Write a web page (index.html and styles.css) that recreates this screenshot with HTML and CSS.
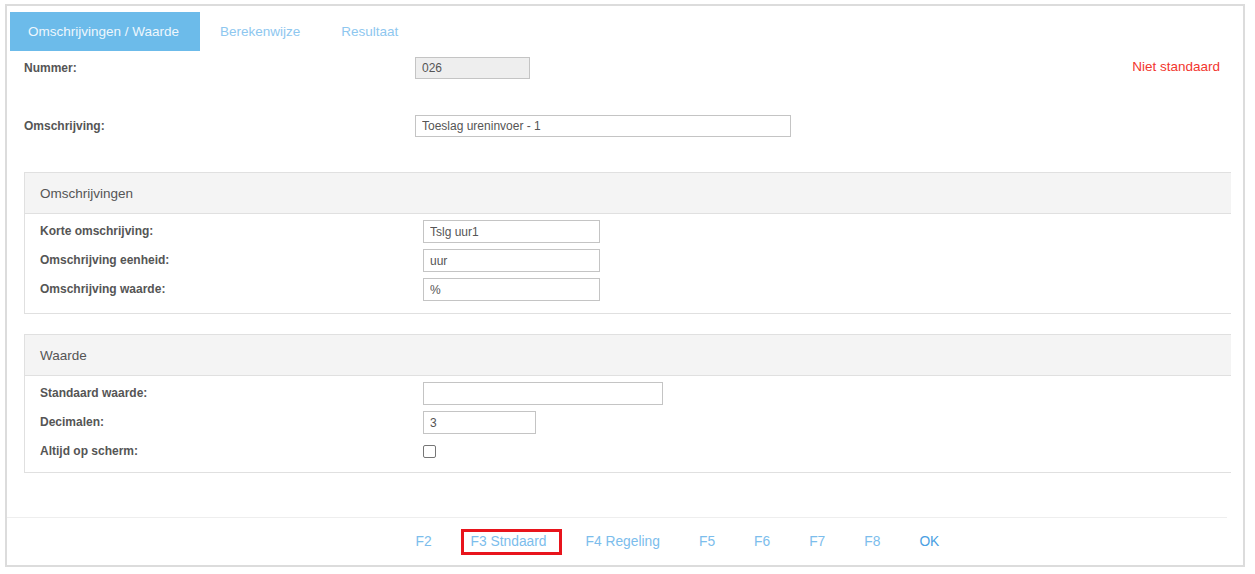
FILE: index.html
```html
<!DOCTYPE html>
<html lang="nl">
<head>
<meta charset="utf-8">
<title>Omschrijvingen / Waarde</title>
<link rel="stylesheet" href="styles.css">
</head>
<body>
<div class="frame">
  <nav class="tabs">
    <a class="tab active">Omschrijvingen / Waarde</a>
    <a class="tab">Berekenwijze</a>
    <a class="tab">Resultaat</a>
  </nav>
  <div class="content">
    <div class="top-row row-nummer">
      <label class="lbl">Nummer:</label>
      <div class="field"><input class="inp inp-num" type="text" value="026" readonly></div>
      <div class="status">Niet standaard</div>
    </div>
    <div class="top-row row-omschr">
      <label class="lbl">Omschrijving:</label>
      <div class="field"><input class="inp inp-omschr" type="text" value="Toeslag ureninvoer - 1"></div>
    </div>

    <section class="panel panel-1">
      <div class="panel-head">Omschrijvingen</div>
      <div class="panel-body">
        <div class="prow"><label class="lbl">Korte omschrijving:</label><input class="inp inp-short" type="text" value="Tslg uur1"></div>
        <div class="prow"><label class="lbl">Omschrijving eenheid:</label><input class="inp inp-short" type="text" value="uur"></div>
        <div class="prow"><label class="lbl">Omschrijving waarde:</label><input class="inp inp-short" type="text" value="%"></div>
      </div>
    </section>

    <section class="panel panel-2">
      <div class="panel-head">Waarde</div>
      <div class="panel-body">
        <div class="prow"><label class="lbl">Standaard waarde:</label><input class="inp inp-std" type="text" value=""></div>
        <div class="prow"><label class="lbl">Decimalen:</label><input class="inp inp-dec" type="text" value="3"></div>
        <div class="prow"><label class="lbl">Altijd op scherm:</label><span class="check"></span></div>
      </div>
    </section>
  </div>
  <footer class="footer">
    <a class="fbtn">F2</a>
    <a class="fbtn selected">F3 Stndaard</a>
    <a class="fbtn">F4 Regeling</a>
    <a class="fbtn">F5</a>
    <a class="fbtn">F6</a>
    <a class="fbtn">F7</a>
    <a class="fbtn">F8</a>
    <a class="fbtn ok">OK</a>
  </footer>
</div>
</body>
</html>
```

FILE: styles.css
```css
* { box-sizing: border-box; }
html, body { margin: 0; padding: 0; background: #fff; }
body {
  font-family: "Liberation Sans", Arial, sans-serif;
  color: #555;
}
.frame {
  margin: 4px 10px 0 5px;
  height: 563px;
  border: 2px solid #dcdcdc;
  display: flex;
  flex-direction: column;
}
.tabs {
  display: flex;
  margin: 6px 0 0 3px;
  height: 39px;
}
.tab {
  display: flex;
  align-items: center;
  padding: 0 21px 0 20px;
  font-size: 13.5px;
  color: #8ec7ef;
  white-space: nowrap;
}
.tab.active {
  background: #6cbbea;
  color: #eef7fd;
  padding: 0 18px;
  width: 190px;
}
.content {
  padding: 0 0 0 17px;
}
.top-row {
  display: flex;
  align-items: center;
  height: 22px;
}
.row-nummer { margin-top: 6px; }
.row-omschr { margin-top: 36px; }
.lbl {
  font-size: 12px;
  font-weight: bold;
  color: #555;
  white-space: nowrap;
}
.top-row .lbl { width: 391px; margin-top: -1px; }
.inp {
  font-family: "Liberation Sans", Arial, sans-serif;
  font-size: 12px;
  color: #555;
  height: 22px;
  border: 1px solid #c4c4c4;
  padding: 0 6px;
  background: #fff;
  outline: none;
}
.inp-num { width: 115px; background: #eee; }
.inp-omschr { width: 376px; }
.status {
  margin-left: auto;
  margin-right: 23px;
  margin-top: -3px;
  font-size: 13.5px;
  color: #f2362e;
}
.panel {
  width: 1207px;
  border: 1px solid #e0e0e0;
  border-right: none;
}
.panel-1 { margin-top: 35px; height: 142px; }
.panel-2 { margin-top: 20px; height: 139px; }
.panel-head {
  height: 41px;
  background: #f4f4f4;
  border-bottom: 1px solid #e0e0e0;
  display: flex;
  align-items: center;
  padding-left: 15px;
  font-size: 13.5px;
  color: #555;
}
.panel-body { padding: 3px 0 0 15px; }
.prow {
  display: flex;
  align-items: center;
  height: 29px;
}
.prow .lbl { width: 383px; margin-top: -1px; }
.inp-short { width: 177px; height: 23px; }
.inp-std { width: 240px; height: 23px; }
.inp-dec { width: 113px; height: 23px; }
.check {
  display: block;
  width: 13px;
  height: 13px;
  border: 1px solid #767676;
  border-radius: 2px;
  margin-top: -1px;
}
.footer {
  margin-top: auto;
  margin-right: 16px;
  border-top: 1px solid #eeeeee;
  height: 48px;
  display: flex;
  align-items: center;
  padding-left: 389px;
  padding-bottom: 1px;
}
.fbtn {
  position: relative;
  padding: 0 19.5px;
  font-size: 13.8px;
  color: #7cbdec;
}
.fbtn.ok { color: #4b9fe3; }
.fbtn.selected::after {
  content: "";
  position: absolute;
  left: 10px;
  right: 4px;
  top: -5px;
  bottom: -6px;
  border: 3px solid #e8141c;
}
```
